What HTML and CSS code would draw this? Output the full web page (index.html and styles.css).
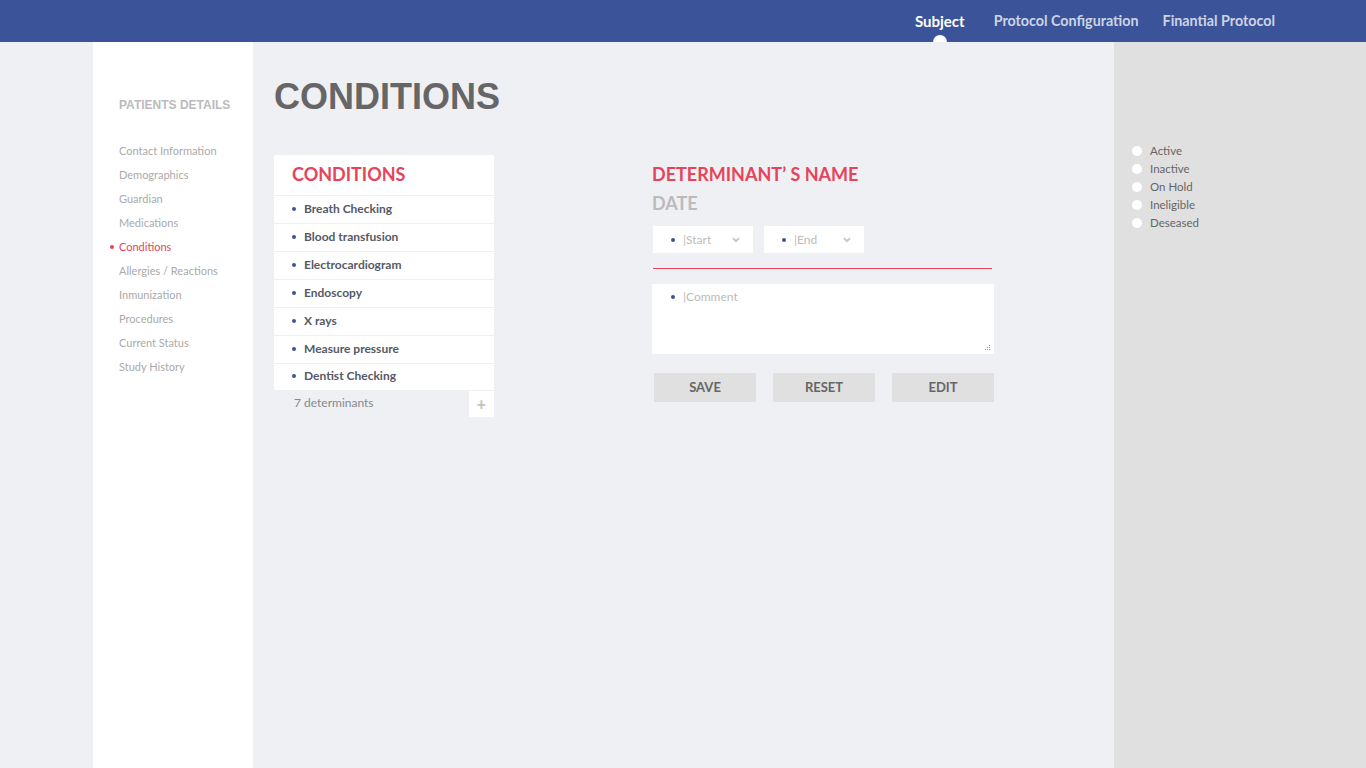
FILE: index.html
```html
<!DOCTYPE html>
<html>
<head>
<meta charset="utf-8">
<link rel="stylesheet" href="styles.css">
</head>
<body>
<header class="topbar">
  <nav class="topnav">
    <a class="navlink active">Subject</a>
    <a class="navlink">Protocol Configuration</a>
    <a class="navlink">Finantial Protocol</a>
  </nav>
</header>
<div class="layout">
  <aside class="sidebar">
    <h3 class="side-title">PATIENTS DETAILS</h3>
    <ul class="side-list">
      <li>Contact Information</li>
      <li>Demographics</li>
      <li>Guardian</li>
      <li>Medications</li>
      <li class="current">Conditions</li>
      <li>Allergies / Reactions</li>
      <li>Inmunization</li>
      <li>Procedures</li>
      <li>Current Status</li>
      <li>Study History</li>
    </ul>
  </aside>
  <main class="main">
    <h1 class="page-title">CONDITIONS</h1>
    <div class="content">
      <section class="cond">
        <div class="card">
          <h2 class="card-title">CONDITIONS</h2>
          <ul class="cond-list">
            <li>Breath Checking</li>
            <li>Blood transfusion</li>
            <li>Electrocardiogram</li>
            <li>Endoscopy</li>
            <li>X rays</li>
            <li>Measure pressure</li>
            <li>Dentist Checking</li>
          </ul>
        </div>
        <div class="card-foot">
          <span class="count">7 determinants</span>
          <span class="add">+</span>
        </div>
      </section>
      <section class="form">
        <h2 class="det-name">DETERMINANT’ S NAME</h2>
        <h3 class="date">DATE</h3>
        <div class="selects">
          <div class="select"><span class="dot"></span><span class="ph">|Start</span><svg class="chev" width="8" height="6" viewBox="0 0 8 6"><path d="M1 1.2 L4 4.2 L7 1.2" fill="none" stroke="#c8c8c8" stroke-width="2"/></svg></div>
          <div class="select"><span class="dot"></span><span class="ph">|End</span><svg class="chev" width="8" height="6" viewBox="0 0 8 6"><path d="M1 1.2 L4 4.2 L7 1.2" fill="none" stroke="#c8c8c8" stroke-width="2"/></svg></div>
        </div>
        <div class="rule"></div>
        <div class="comment">
          <span class="dot"></span><span class="ph">|Comment</span>
          <svg class="grip" width="6" height="6" viewBox="0 0 6 6"><rect x="4" y="0" width="1" height="1" fill="#999"/><rect x="2" y="2" width="1" height="1" fill="#999"/><rect x="4" y="2" width="1" height="1" fill="#999"/><rect x="0" y="4" width="1" height="1" fill="#999"/><rect x="2" y="4" width="1" height="1" fill="#999"/><rect x="4" y="4" width="1" height="1" fill="#999"/></svg>
        </div>
        <div class="buttons">
          <button class="btn">SAVE</button>
          <button class="btn">RESET</button>
          <button class="btn">EDIT</button>
        </div>
      </section>
    </div>
  </main>
  <aside class="status">
    <ul class="status-list">
      <li><span class="radio"></span>Active</li>
      <li><span class="radio"></span>Inactive</li>
      <li><span class="radio"></span>On Hold</li>
      <li><span class="radio"></span>Ineligible</li>
      <li><span class="radio"></span>Deseased</li>
    </ul>
  </aside>
</div>
</body>
</html>
```
FILE: styles.css
```css
* { box-sizing: border-box; }
html, body { margin: 0; padding: 0; }
body {
  font-family: Lato, "Liberation Sans", sans-serif;
  background: #eef0f4;
  height: 768px;
  overflow: hidden;
}
ul { list-style: none; margin: 0; padding: 0; }
h1, h2, h3 { margin: 0; }

.topbar {
  height: 42px;
  background: #3b5499;
  display: flex;
  justify-content: flex-end;
  padding-right: 91px;
}
.topnav { display: flex; gap: 24px; align-items: center; }
.navlink {
  font-size: 14.3px;
  font-weight: 700;
  color: #ccd3e6;
  position: relative;
  line-height: 42px;
}
.navlink.active { color: #fff; font-size: 15px; margin-right: 5px; }
.navlink.active::after {
  content: "";
  position: absolute;
  left: 50%;
  bottom: 0;
  width: 14px;
  height: 7px;
  margin-left: -7px;
  background: #fff;
  border-radius: 7px 7px 0 0;
}

.layout {
  display: flex;
  height: 726px;
  padding-left: 93px;
}
.sidebar {
  width: 160px;
  background: #fff;
  padding: 56px 0 0 26px;
}
.side-title {
  font-family: "Liberation Sans", Arial, sans-serif;
  font-size: 12px;
  font-weight: 700;
  color: #bbbbbb;
  line-height: 14px;
}
.side-list { margin-top: 27px; }
.side-list li {
  font-size: 11px;
  color: #aaaaaa;
  line-height: 24px;
  position: relative;
}
.side-list li.current { color: #e8435a; }
.side-list li.current::before {
  content: "";
  position: absolute;
  left: -9px;
  top: 10px;
  width: 4px;
  height: 4px;
  border-radius: 50%;
  background: #e8435a;
}

.main {
  width: 861px;
  padding: 35px 0 0 21px;
}
.page-title {
  font-family: "Liberation Sans", Arial, sans-serif;
  font-size: 36px;
  font-weight: 700;
  color: #666;
  line-height: 40px;
}
.content {
  display: flex;
  margin-top: 38px;
  gap: 158px;
}
.cond { width: 220px; }
.card { background: #fff; }
.card-title {
  font-size: 18px;
  font-weight: 700;
  color: #e8435a;
  height: 41px;
  line-height: 38px;
  padding-left: 18px;
  border-bottom: 1px solid #eef0f4;
}
.cond-list li {
  font-size: 12px;
  font-weight: 700;
  color: #555a66;
  height: 28px;
  line-height: 25px;
  padding-left: 30px;
  border-bottom: 1px solid #eef0f4;
  position: relative;
}
.cond-list li:last-child { border-bottom: none; height: 26px; line-height: 24px; }
.cond-list li::before {
  content: "";
  position: absolute;
  left: 18px;
  top: 11px;
  width: 4px;
  height: 4px;
  border-radius: 50%;
  background: #3b5499;
}
.cond-list li:last-child::before { top: 10px; }
.card-foot {
  display: flex;
  justify-content: space-between;
  align-items: flex-start;
  height: 28px;
  padding-top: 1px;
}
.count {
  font-size: 12px;
  color: #888;
  padding-left: 20px;
  line-height: 24px;
}
.add {
  width: 25px;
  height: 26px;
  background: #fff;
  color: #c4c4c4;
  font-size: 16px;
  font-weight: 900;
  text-align: center;
  line-height: 25px;
}

.form { width: 342px; padding-top: 8px; }
.det-name {
  font-size: 18px;
  font-weight: 700;
  color: #e8435a;
  line-height: 22px;
}
.date {
  font-size: 18px;
  font-weight: 700;
  color: #bbbbbb;
  line-height: 22px;
  margin-top: 7px;
}
.selects { display: flex; gap: 11px; margin-top: 12px; padding-left: 1px; }
.select {
  width: 100px;
  height: 27px;
  background: #fff;
  display: flex;
  align-items: center;
  padding-left: 18px;
  position: relative;
}
.dot {
  width: 4px;
  height: 4px;
  border-radius: 50%;
  background: #3b5499;
  flex: none;
}
.ph {
  font-size: 12px;
  color: #bbbbbb;
  margin-left: 8px;
  line-height: 14px;
}
.chev { position: absolute; right: 13px; top: 11px; }
.rule {
  height: 1px;
  background: #e8435a;
  margin: 15px 2px 0 1px;
}
.comment {
  height: 70px;
  background: #fff;
  margin-top: 15px;
  display: flex;
  align-items: flex-start;
  padding: 6px 0 0 19px;
  position: relative;
}
.comment .dot { margin-top: 5px; }
.grip { position: absolute; right: 3px; bottom: 3px; }
.buttons {
  display: flex;
  justify-content: space-between;
  margin-top: 19px;
  padding-left: 2px;
}
.btn {
  width: 102px;
  height: 29px;
  background: #e0e0e0;
  border: none;
  font-family: Lato, sans-serif;
  font-size: 13px;
  font-weight: 700;
  color: #666;
  padding: 0 0 2px 0;
}

.status {
  flex: 1;
  background: #e0e0e0;
  padding: 100px 0 0 18px;
}
.status-list li {
  font-size: 11.5px;
  color: #666;
  line-height: 18px;
  display: flex;
  align-items: center;
}
.radio {
  width: 10px;
  height: 10px;
  border-radius: 50%;
  background: #fff;
  margin-right: 8px;
}
```
